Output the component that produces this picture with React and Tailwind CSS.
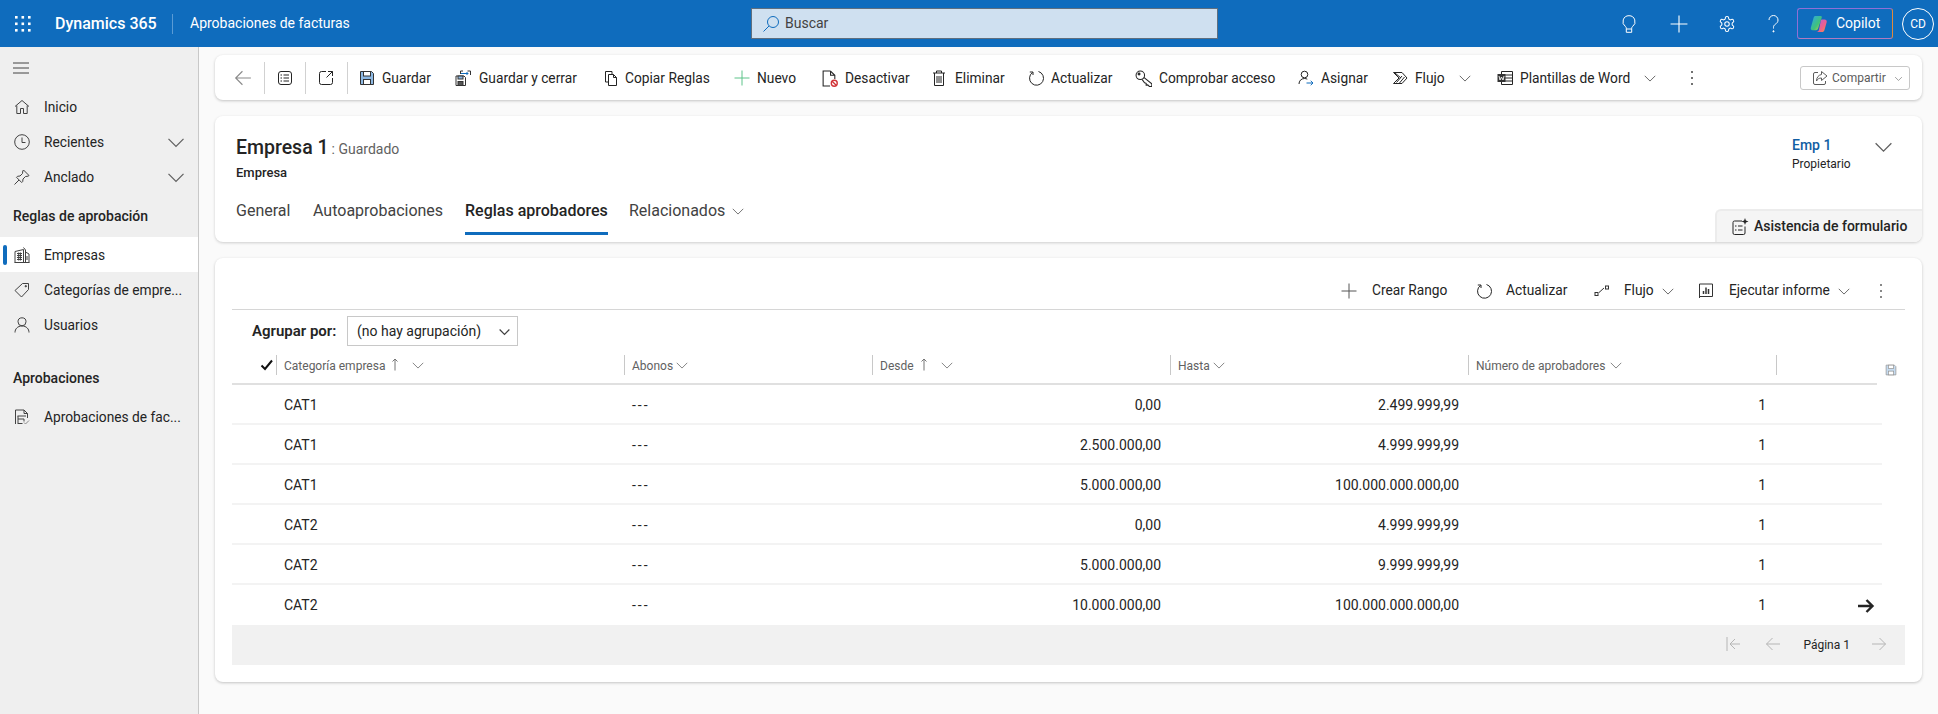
import React from "react";

const S = ({ s = 16, children, className = "", vb = 16 }) => (
  <svg width={s} height={s} viewBox={`0 0 ${vb} ${vb}`} fill="none" stroke="currentColor" strokeWidth="1" className={`shrink-0 ${className}`}>
    {children}
  </svg>
);
const Chevron = ({ s = 16, className = "", w = 1 }) => (
  <S s={s} className={className}><path d="M2 5.5l6 6 6-6" strokeWidth={w} /></S>
);
const Waffle = () => (
  <svg width="16" height="16" viewBox="0 0 16 16" fill="white" className="shrink-0">
    {[0, 6.5, 13].flatMap((y) => [0, 6.5, 13].map((x) => <rect key={`${x}${y}`} x={x} y={y} width="2.6" height="2.6" />))}
  </svg>
);
const Back = ({ className = "", s = 18 }) => <S s={s} className={className}><path d="M15 8H1.5M7.5 2L1.5 8l6 6" /></S>;
const Forward = ({ className = "", s = 18 }) => <S s={s} className={className}><path d="M1 8h13.5M8.5 2l6 6-6 6" /></S>;
const ListBox = () => <S><rect x="1.500" y="1.500" width="13" height="13" rx="2.500" /><path d="M6.500 5H12M6.500 8H12M6.500 11H12M3.500 5h1.500M3.500 8h1.500M3.500 11h1.500" /></S>;
const Popout = () => <S><path d="M8 1.500H3.500a2 2 0 0 0-2 2v9a2 2 0 0 0 2 2h9a2 2 0 0 0 2-2V8" /><path d="M10 1.500h4.500V6M14.500 1.500L8.500 7.500" /></S>;
const Floppy = ({ className = "" }) => (
  <S className={className}>
    <path d="M1.500 1.500h11l2 2v11h-13z" fill="#8db8e2" stroke="none" />
    <path d="M1.500 1.500h11l2 2v11h-13z" stroke="#333" />
    <rect x="4.500" y="1.500" width="7" height="4.500" fill="white" stroke="#333" />
    <rect x="4.500" y="9.500" width="7" height="5" fill="white" stroke="#333" />
  </S>
);
const SaveClose = () => (
  <S vb={16}>
    <path d="M1 6h8l1.500 1.500V15.500H1z" stroke="#333" />
    <rect x="3" y="6" width="5" height="3" fill="#8db8e2" stroke="#333" />
    <rect x="3" y="11.500" width="5" height="4" fill="#555" stroke="#333" />
    <path d="M5.500 4V1H8M12.500 1h3v4" stroke="#333" />
    <path d="M6 3.500h7M11.500 2l1.500 1.500L11.500 5" stroke="#0f6cbd" />
  </S>
);
const CopyI = () => <S><path d="M9 4.500V1.500H2.500v10.500H5.500" /><path d="M5.500 4.500h5l3 3v8h-8z" /><path d="M10.500 4.500v3h3" /></S>;
const DocOff = () => (
  <S s={17}><path d="M9 1H2v14h6.500" /><path d="M9 1l4 4v3.500M9 1v4h4" /><circle cx="12.500" cy="12.500" r="2.800" stroke="#d13438" strokeWidth="1.300" /><path d="M10.500 10.500l4 4" stroke="#d13438" strokeWidth="1.300" /></S>
);
const Trash = () => <S><path d="M2 3h12M5.500 3V1h5v2M3.500 3v12.500h9V3M6 6v7M8 6v7M10 6v7" /></S>;
const Refresh = ({ s = 16 }) => <S s={s}><path d="M4.500 2.500A7 7 0 1 0 10.500 1.500M5 5V2H1.800" /></S>;
const KeyI = () => <S s={17}><circle cx="5" cy="5" r="4" /><circle cx="3.800" cy="3.800" r=".9" fill="currentColor" /><path d="M8.300 7l7.500 6v2.500h-2.300l-1.500-1.500-1.500.2v-1.700L9 12 6.800 9" /></S>;
const Assign = () => <S><circle cx="6.500" cy="4.500" r="3.300" /><path d="M1 14c0-3 2-5.500 5.500-5.500 1 0 2 .2 2.800.7" /><path d="M8.500 13H15M12.700 10.800L15 13l-2.300 2.200" stroke="#0f6cbd" /></S>;
const FlowI = () => <S><path d="M1.500 2.500h8.500L15 8l-5 5.500H1.500L7 8zM4.500 12.500L10 6M7.500 13l5-6M3 3l6 5" /></S>;
const WordI = () => (
  <S>
    <path d="M4.500 1.500h11v13h-11zM8 5h7.500M8 8h7.500M8 11h7.500" />
    <rect x=".5" y="4" width="8" height="8" fill="#333" stroke="none" />
    <path d="M2 6l1 4 1.500-3L6 10l1-4" stroke="white" strokeWidth=".9" />
  </S>
);
const Dots = ({ className = "" }) => (
  <svg width="16" height="16" viewBox="0 0 16 16" fill="currentColor" className={`shrink-0 ${className}`}>
    <circle cx="8" cy="2" r="1" /><circle cx="8" cy="8" r="1" /><circle cx="8" cy="14" r="1" />
  </svg>
);
const ShareI = () => <S><path d="M6 2.500H3A1.500 1.500 0 0 0 1.500 4v9A1.500 1.500 0 0 0 3 14.500h9a1.500 1.500 0 0 0 1.500-1.500v-2" /><path d="M9.500 1.500L15 6l-5.500 4.500V8C7 8 5.500 9 4.500 11c0-3.500 2-6 5-6.500z" /></S>;
const PlusI = ({ s = 16, className = "" }) => <S s={s} className={className}><path d="M8 .5v15M.5 8h15" /></S>;

const Home = () => <S><path d="M1 7.500L8 1.500l7 6M2.800 6.500v8h3.700v-5h3v5h3.700v-8" /></S>;
const Clock = () => <S><circle cx="8" cy="8" r="7.300" /><path d="M8 3.500v5h3.500" /></S>;
const Pin = () => <S><path d="M9.500 1l5.500 5.500-1 .7-2.500.3-2.500 2.500-.3 2.500-1 1-5.200-5.200 1-1 2.500-.3L8.500 4.500l.3-2.500zM5 11L.5 15.500" /></S>;
const Building = () => (
  <S><path d="M1 15.500V4.500L9.500 2.500V15.500M9.500 .5l2 2.500V15.500M11.500 5l3.500 2v8.500M.5 15.500h15" /><path d="M3 6.500h5M3 8.500h5M3 10.500h5M3 12.500h5M4.700 5.500v8M6.400 5.500v8" /><path d="M13 9v4" /></S>
);
const Tag = () => <S><path d="M8.500 1.500h6v6l-7 7.500L1 8.500z" /><circle cx="11.800" cy="4.200" r=".7" fill="currentColor" /></S>;
const User = () => <S><circle cx="8" cy="4.800" r="4" /><path d="M1 15.500c0-3.500 2.500-6.500 7-6.500s7 3 7 6.500" /></S>;
const Invoice = () => <S><path d="M1.500 15V1h8.500l3.500 3.500V9" /><path d="M10 1v3.500h3.500M3.500 7H12M4 7v7M4 10H10M10 10v2.500M3.500 14.500H8.500" /><path d="M10 13.500l1.500 1.500 3.500-3.500" stroke="#8a8a8a" /></S>;

function Cmd({ icon, label, w, gap = "gap-[7px]", chev }) {
  return (
    <div className={`flex items-center shrink-0 ${gap}`} style={{ width: w }}>
      {icon}
      <span className="whitespace-nowrap">{label}</span>
      {chev && <Chevron s={14} className={chev} />}
    </div>
  );
}

function SideRow({ icon, label, chev, active }) {
  return (
    <div className={`relative flex items-center h-[35px] pl-[14px] pr-[12px] ${active ? "bg-white" : ""}`}>
      {active && <div className="absolute left-[3px] top-[8px] w-[4px] h-[20px] bg-[#0f6cbd] rounded-sm" />}
      <span className="w-[30px] flex text-[#424242]">{icon}</span>
      <span className="flex-1 whitespace-nowrap text-[#242424] text-[13.75px] pt-[2px]">{label}</span>
      {chev && <Chevron s={20} className="text-[#616161]" />}
    </div>
  );
}

const rows = [
  ["CAT1", "0,00", "2.499.999,99"],
  ["CAT1", "2.500.000,00", "4.999.999,99"],
  ["CAT1", "5.000.000,00", "100.000.000.000,00"],
  ["CAT2", "0,00", "4.999.999,99"],
  ["CAT2", "5.000.000,00", "9.999.999,99"],
  ["CAT2", "10.000.000,00", "100.000.000.000,00"],
];
const cols = "grid-cols-[24px_348px_248px_298px_298px_308px_106px]";

function Head({ label, sort, chevGap = "ml-[2px]" }) {
  return (
    <div className="h-[20px] border-l border-[#c8c8c8] pl-[7px] flex items-center text-[12px] text-[#616161] whitespace-nowrap">
      <span className="pt-[2px]">{label}</span>
      {sort && <svg width="8" height="13" viewBox="0 0 8 13" fill="none" stroke="#757575" className="ml-[6px]"><path d="M4 12.500V1M1.500 3.500L4 1l2.500 2.500" /></svg>}
      <Chevron s={14} className={`text-[#757575] ${sort ? "ml-[12px]" : chevGap}`} />
    </div>
  );
}

export default function App() {
  return (
    <div className="w-[1938px] h-[714px] flex flex-col overflow-hidden text-[14px] text-[#242424] bg-[#fafafa] font-['Roboto','Liberation_Sans',sans-serif]">
      <header className="h-[47px] shrink-0 bg-[#0f6cbd] text-white flex items-center">
        <div className="w-[55px] pl-[15px] flex"><Waffle /></div>
        <span className="text-[16px] font-medium w-[117px] whitespace-nowrap">Dynamics 365</span>
        <div className="h-[20px] border-l border-[#5a9bd5] mr-[17px]" />
        <span className="text-[14px] w-[561px] whitespace-nowrap">Aprobaciones de facturas</span>
        <div className="w-[467px] h-[31px] bg-[#cfe0f0] border border-[#5f6f7f] flex items-center pl-[10px] gap-[5px] text-[#424242]">
          <svg width="18" height="18" viewBox="0 0 18 18" fill="none" stroke="#0f6cbd"><circle cx="11" cy="7" r="5.500" /><path d="M7 11l-5.500 5.500" /></svg>
          Buscar
        </div>
        <div className="flex-1 flex items-center justify-end">
          <svg width="14" height="18" viewBox="0 0 14 18" fill="none" stroke="white" className="mr-[34px]"><path d="M7 .7a6 6 0 0 0-3.500 10.900c.5.400.8 1 .8 1.700v4h5.400v-4c0-.7.3-1.300.8-1.700A6 6 0 0 0 7 .7zM4.300 14h5.400" /></svg>
          <PlusI s={18} className="mr-[30px] text-white" />
          <svg width="18" height="18" viewBox="0 0 24 24" fill="none" stroke="white" strokeWidth="1.400" className="mr-[32px]"><path d="M12.200 2h-.4a2 2 0 0 0-2 2v.2a2 2 0 0 1-1 1.700l-.4.300a2 2 0 0 1-2 0l-.2-.1a2 2 0 0 0-2.700.7l-.2.400a2 2 0 0 0 .7 2.700l.2.100a2 2 0 0 1 1 1.700v.5a2 2 0 0 1-1 1.800l-.2.100a2 2 0 0 0-.7 2.700l.2.400a2 2 0 0 0 2.700.7l.2-.1a2 2 0 0 1 2 0l.4.300a2 2 0 0 1 1 1.700v.2a2 2 0 0 0 2 2h.4a2 2 0 0 0 2-2v-.2a2 2 0 0 1 1-1.700l.4-.3a2 2 0 0 1 2 0l.2.1a2 2 0 0 0 2.700-.7l.2-.4a2 2 0 0 0-.7-2.700l-.2-.1a2 2 0 0 1-1-1.800v-.5a2 2 0 0 1 1-1.700l.2-.1a2 2 0 0 0 .7-2.700l-.2-.4a2 2 0 0 0-2.700-.7l-.2.1a2 2 0 0 1-2 0l-.4-.3a2 2 0 0 1-1-1.700V4a2 2 0 0 0-2-2z" /><circle cx="12" cy="12" r="3" /></svg>
          <svg width="11" height="18" viewBox="0 0 11 18" fill="none" stroke="white" strokeWidth="1" className="mr-[18px]"><path d="M1 5a4.500 4.500 0 0 1 9 0c0 2.300-1.300 3.200-2.700 4.300C6 10.200 5.500 11 5.500 12.500v1" /><circle cx="5.500" cy="16.300" r=".6" fill="white" /></svg>
          <div className="h-[31px] w-[96px] rounded-[3px] border border-[#8f6fd6] [border-right-color:#e08a3c] [border-bottom-color:#b07ac0] flex items-center pl-[12px] gap-[8px] mr-[9px]">
            <svg width="18" height="18" viewBox="0 0 20 20">
              <defs>
                <linearGradient id="c1" x1="0" y1="0" x2="1" y2="1"><stop offset="0" stopColor="#2fa7e8" /><stop offset=".6" stopColor="#3fc27a" /><stop offset="1" stopColor="#e8d13c" /></linearGradient>
                <linearGradient id="c2" x1="0" y1="0" x2="1" y2="1"><stop offset="0" stopColor="#b05fe0" /><stop offset=".6" stopColor="#f0608a" /><stop offset="1" stopColor="#f59a3c" /></linearGradient>
              </defs>
              <path d="M6 1h6c1 0 1.500 1 1 2L9 15c-.7 1.800-2 2-3 2H3c-2 0-2.500-1.500-2-3L4 3c.4-1.300 1-2 2-2z" fill="url(#c1)" />
              <path d="M13 5h3c2 0 3 1.500 2.500 3l-2.500 9c-.5 1.300-1.300 2-2.500 2H7c1.500 0 2.500-1 3-2.500L12 6c.2-.6.500-1 1-1z" fill="url(#c2)" />
            </svg>
            <span className="text-[14px]">Copilot</span>
          </div>
          <div className="w-[32px] h-[32px] rounded-full border border-white flex items-center justify-center text-[12px] mr-[4px] shrink-0">CD</div>
        </div>
      </header>

      <div className="flex-1 flex min-h-0">
        <aside className="w-[199px] shrink-0 bg-[#efefef] border-r border-[#c8c8c8] flex flex-col">
          <div className="h-[42px] shrink-0 flex items-center pl-[12px] text-[#424242]">
            <svg width="18" height="18" viewBox="0 0 18 18" fill="none" stroke="currentColor"><path d="M1 4h16M1 9h16M1 14h16" /></svg>
          </div>
          <SideRow icon={<Home />} label="Inicio" />
          <SideRow icon={<Clock />} label="Recientes" chev />
          <SideRow icon={<Pin />} label="Anclado" chev />
          <div className="h-[43px] shrink-0 flex items-center pl-[13px] pt-[2px] font-medium text-[14px]">Reglas de aprobación</div>
          <SideRow icon={<Building />} label="Empresas" active />
          <SideRow icon={<Tag />} label="Categorías de empre..." />
          <SideRow icon={<User />} label="Usuarios" />
          <div className="h-[57px] shrink-0 flex items-center pl-[13px] pt-[16px] font-medium text-[14px]">Aprobaciones</div>
          <SideRow icon={<Invoice />} label="Aprobaciones de fac..." />
        </aside>

        <main className="flex-1 min-w-0 px-[16px] pt-[8px] flex flex-col">
          <div className="h-[45px] shrink-0 bg-white rounded-[8px] shadow-[0_1px_3px_rgba(0,0,0,0.22)] flex items-center pl-[19px] pt-[1px] text-[13.75px]">
            <Back className="text-[#8a8a8a]" />
            <div className="h-[32px] border-l border-[#d1d1d1] ml-[12px] mr-[12px]" />
            <ListBox />
            <div className="h-[32px] border-l border-[#d1d1d1] ml-[12px] mr-[12px]" />
            <Popout />
            <div className="h-[32px] border-l border-[#d1d1d1] ml-[13px] mr-[11px]" />
            <Cmd w={96} icon={<Floppy />} label="Guardar" />
            <Cmd w={148} icon={<SaveClose />} label="Guardar y cerrar" gap="gap-[8px]" />
            <Cmd w={131} icon={<CopyI />} label="Copiar Reglas" gap="gap-[6px]" />
            <Cmd w={87} icon={<PlusI className="text-[#5dc389]" />} label="Nuevo" />
            <Cmd w={110} icon={<DocOff />} label="Desactivar" />
            <Cmd w={97} icon={<Trash />} label="Eliminar" gap="gap-[8px]" />
            <Cmd w={107} icon={<Refresh />} label="Actualizar" />
            <Cmd w={163} icon={<KeyI />} label="Comprobar acceso" />
            <Cmd w={94} icon={<Assign />} label="Asignar" />
            <Cmd w={105} icon={<FlowI />} label="Flujo" chev="ml-[6px] text-[#555]" />
            <Cmd w={187} icon={<WordI />} label="Plantillas de Word" chev="ml-[6px] text-[#555]" />
            <Dots className="text-[#424242]" />
            <div className="ml-[100px] w-[110px] h-[24px] border border-[#c8c8c8] rounded-[3px] flex items-center pl-[11px] gap-[4px] text-[12px] text-[#5c5c5c]">
              <ShareI />Compartir<Chevron s={9} className="ml-[4px]" />
            </div>
          </div>

          <section className="mt-[16px] h-[126px] shrink-0 bg-white rounded-[8px] shadow-[0_1px_3px_rgba(0,0,0,0.18)] relative pl-[21px] pt-[18px] flex flex-col">
            <div className="flex items-baseline h-[28px]">
              <span className="text-[19.5px] font-medium leading-[28px]">Empresa 1</span>
              <span className="text-[#616161] text-[14px] ml-[3px]">: Guardado</span>
            </div>
            <div className="text-[13px] font-medium leading-[17px] mt-[2px]">Empresa</div>
            <nav className="flex items-center text-[16px] h-[24px] mt-[18px] text-[#424242]">
              <span className="w-[77px]">General</span>
              <span className="w-[152px]">Autoaprobaciones</span>
              <span className="relative w-[164px] text-[#242424] font-medium whitespace-nowrap">
                Reglas aprobadores
                <span className="absolute left-0 w-[143px] top-[33px] h-[3px] bg-[#0f6cbd]" />
              </span>
              <span>Relacionados</span>
              <Chevron s={14} className="ml-[6px] text-[#616161]" />
            </nav>
            <div className="absolute left-[1577px] top-[20px] flex flex-col">
              <span className="text-[#115ea3] text-[14px] font-medium leading-[18px]">Emp 1</span>
              <span className="text-[12px] leading-[20px]">Propietario</span>
            </div>
            <Chevron s={21} className="absolute left-[1658px] top-[20px] text-[#616161]" />
            <div className="absolute right-0 bottom-0 w-[207px] h-[33px] bg-[#f5f5f5] rounded-tl-[6px] rounded-br-[8px] border-t-2 border-l-2 border-[#ececec] flex items-center pl-[14px] gap-[5px] font-medium text-[14px]">
              <svg width="18" height="18" viewBox="0 0 18 18" fill="none" stroke="#242424"><path d="M11 3H3.500A1.500 1.500 0 0 0 2 4.500v10.500a1.500 1.500 0 0 0 1.500 1.500h9A1.500 1.500 0 0 0 14 15V8.500" /><path d="M7 8h4.500M7 12h4.500M4 8h1.500M4 12h1.500" /><path d="M14 0l.9 2.600 2.600.9-2.600.9L14 7l-.9-2.600-2.600-.9 2.600-.9z" fill="#242424" stroke="none" /></svg>
              Asistencia de formulario
            </div>
          </section>

          <section className="mt-[16px] h-[424px] shrink-0 bg-white rounded-[8px] shadow-[0_1px_3px_rgba(0,0,0,0.22)] pl-[17px] pr-[17px]">
            <div className="h-[52px] pt-[14px] border-b border-[#d6d6d6] flex items-center justify-end pr-[16px] text-[13.75px]">
              <div className="flex items-center w-[135px] gap-[15px]"><PlusI className="text-[#555]" />Crear Rango</div>
              <div className="flex items-center w-[118px] gap-[14px]"><Refresh />Actualizar</div>
              <div className="flex items-center w-[104px] gap-[14px]">
                <svg width="16" height="16" viewBox="0 0 16 16" fill="none" stroke="#333"><rect x="1" y="9.500" width="3" height="3" /><rect x="11.500" y="3" width="3" height="3" /><path d="M5 9.500l5-4.500" /></svg>
                Flujo<Chevron s={14} className="ml-[-7px] text-[#555]" />
              </div>
              <div className="flex items-center w-[175px] gap-[15px]">
                <svg width="16" height="16" viewBox="0 0 16 16" fill="none" stroke="#333"><path d="M1.500 1v14M1.500 1h13v12.500h-13" /><path d="M5.500 11V8M8 11V4.500M10.500 11V6" strokeWidth="1.500" /></svg>
                Ejecutar informe<Chevron s={14} className="ml-[-8px] text-[#555]" />
              </div>
              <Dots className="text-[#616161]" />
            </div>
            <div className="h-[36px] pt-[6px] flex items-center pl-[20px]">
              <span className="font-semibold text-[15px] w-[95px] whitespace-nowrap">Agrupar por:</span>
              <div className="w-[171px] h-[30px] border border-[#c8c8c8] flex items-center pl-[9px] pt-[1px] text-[14px] justify-between pr-[6px] whitespace-nowrap">
                (no hay agrupación)<Chevron s={13} w={1.5} className="text-[#424242]" />
              </div>
            </div>
            <div className={`grid ${cols} h-[39px] items-center border-b-2 border-[#e0e0e0] pl-[20px] w-[1645px]`}>
              <svg width="14" height="14" viewBox="0 0 14 14" fill="none" stroke="#111" strokeWidth="2" className="ml-[8px]"><path d="M1.500 7.500l3.500 3.500 7-8.500" /></svg>
              <Head label="Categoría empresa" sort />
              <Head label="Abonos" />
              <Head label="Desde" sort />
              <Head label="Hasta" />
              <Head label="Número de aprobadores" chevGap="ml-[4px]" />
              <div className="relative h-[20px] border-l border-[#c8c8c8]">
                <Floppy className="absolute left-[108px] top-[9px] w-[12px] h-[12px] opacity-50" />
              </div>
            </div>
            {rows.map((r, i) => (
              <div key={i} className={`grid ${cols} h-[40px] items-center pl-[20px] w-[1650px] text-[14px] text-[#242424] ${i < 5 ? "pt-[3px] border-b-2 border-[#f3f3f3]" : "pt-[1px]"}`}>
                <span />
                <span className="pl-[8px]">{r[0]}</span>
                <span className="pl-[8px] tracking-[2px]">---</span>
                <span className="text-right pr-[9px]">{r[1]}</span>
                <span className="text-right pr-[9px]">{r[2]}</span>
                <span className="text-right pr-[10px]">1</span>
                <span className="flex pl-[81px]">
                  {i === 5 && <svg width="18" height="16" viewBox="0 0 18 16" fill="none" stroke="#242424" strokeWidth="2.400"><path d="M1 8h15M9.500 2l6 6-6 6" /></svg>}
                </span>
              </div>
            ))}
            <div className="h-[40px] pb-[3px] bg-[#f1f1f1] flex items-center justify-end text-[12px] pr-[18px]">
              <svg width="15" height="16" viewBox="0 0 15 16" fill="none" stroke="#b5b5b5" className="mr-[24px]"><path d="M1 1v14M14 8H4M9 3L4 8l5 5" /></svg>
              <Back s={16} className="text-[#b5b5b5] mr-[22px]" />
              <span className="mr-[21px] pt-[2px]">Página 1</span>
              <Forward s={16} className="text-[#b5b5b5]" />
            </div>
          </section>
        </main>
      </div>
    </div>
  );
}
